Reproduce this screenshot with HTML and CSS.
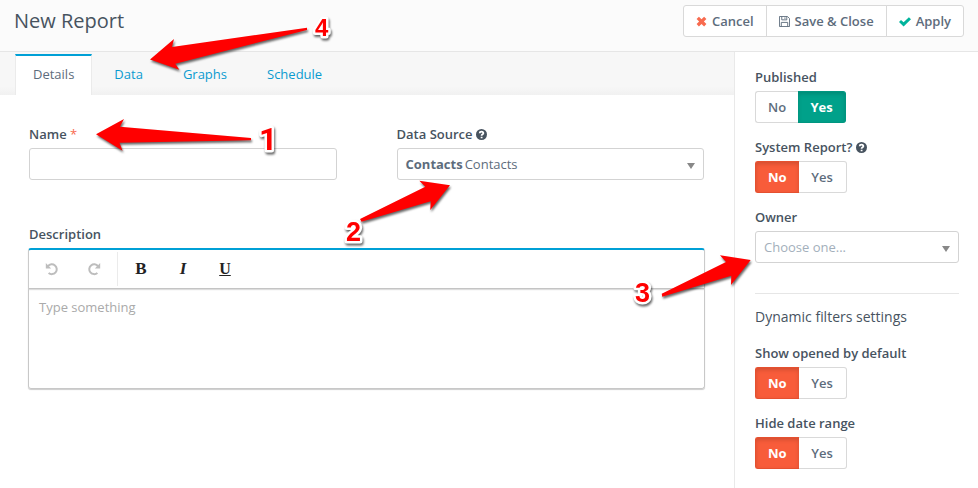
FILE: index.html
```html
<!DOCTYPE html>
<html lang="en">
<head>
    <meta charset="UTF-8">
    <meta name="viewport" content="width=device-width, initial-scale=1.0">
    <title>New Report</title>
    <link rel="stylesheet" href="styles.css">
</head>
<body>
<header class="page-header">
    <h1>New Report</h1>
    <div class="btn-group">
        <button type="button" class="btn">
            <svg class="icon icon-cancel" viewBox="0 0 11 11" width="11" height="11"><path d="M2.9 .8 5.5 3.3 8.1 .8 10.4 3.1 7.9 5.6 10.4 8.1 8.1 10.4 5.5 7.9 2.9 10.4 .6 8.1 3.1 5.6 .6 3.1z"/></svg>
            Cancel
        </button>
        <button type="button" class="btn">
            <svg class="icon icon-save" viewBox="0 0 12 12" width="11" height="11"><path d="M.5.5h8.7l2.3 2.3v8.7H.5zM3 .5v3.7h5.5V.5M2.5 11.5V7h7v4.5M6.5 1.5v1.7"/></svg>
            Save &amp; Close
        </button>
        <button type="button" class="btn">
            <svg class="icon icon-apply" viewBox="0 0 12 11" width="12" height="11"><path d="M2 3.9 4.6 6.3 9.9 1.2 12 3.3 4.6 10.4 0 6z"/></svg>
            Apply
        </button>
    </div>
</header>
<div class="page">
    <main class="content">
        <nav class="tabs">
            <a href="#details" class="tab active">Details</a>
            <a href="#data" class="tab">Data</a>
            <a href="#graphs" class="tab">Graphs</a>
            <a href="#schedule" class="tab">Schedule</a>
        </nav>
        <form class="report-form" id="details">
            <div class="form-row">
                <div class="form-group">
                    <label for="name">Name <span class="required">*</span></label>
                    <input type="text" id="name" class="form-control">
                </div>
                <div class="form-group">
                    <label for="source">Data Source
                        <svg class="help" viewBox="0 0 12 12" width="11" height="11"><circle cx="6" cy="6" r="6"/><path d="M4 4.6C4.1 2.3 8 2.4 8 4.6 8 6 6.1 5.7 6.1 7.4M6.1 8.4v1.6"/></svg>
                    </label>
                    <div class="form-control select-box">
                        <b>Contacts</b>
                        <select id="source">
                            <option>Contacts</option>
                        </select>
                    </div>
                </div>
            </div>
            <div class="form-group">
                <label for="description">Description</label>
                <div class="editor">
                    <div class="toolbar">
                        <div class="tool-group">
                            <button type="button" class="tool" aria-label="Undo" disabled>
                                <svg viewBox="0 0 14 14" width="14" height="14"><path class="arc" d="M3 4.2A4.9 4.9 0 1 1 3.6 10.9"/><path d="M.8 1v5.4h5.4z"/></svg>
                            </button>
                            <button type="button" class="tool" aria-label="Redo" disabled>
                                <svg viewBox="0 0 14 14" width="14" height="14"><path class="arc" d="M11 4.2A4.9 4.9 0 1 0 10.4 10.9"/><path d="M13.2 1v5.4H7.8z"/></svg>
                            </button>
                        </div>
                        <div class="tool-group">
                            <button type="button" class="tool">B</button>
                            <button type="button" class="tool tool-italic">I</button>
                            <button type="button" class="tool tool-underline">U</button>
                        </div>
                    </div>
                    <textarea id="description" placeholder="Type something"></textarea>
                </div>
            </div>
        </form>
    </main>
    <aside class="sidebar">
        <fieldset class="form-group">
            <legend>Published</legend>
            <div class="toggle">
                <input type="radio" name="published" id="published-no">
                <label for="published-no" class="no">No</label>
                <input type="radio" name="published" id="published-yes" checked>
                <label for="published-yes" class="yes">Yes</label>
            </div>
        </fieldset>
        <fieldset class="form-group">
            <legend>System Report?
                <svg class="help" viewBox="0 0 12 12" width="11" height="11"><circle cx="6" cy="6" r="6"/><path d="M4 4.6C4.1 2.3 8 2.4 8 4.6 8 6 6.1 5.7 6.1 7.4M6.1 8.4v1.6"/></svg>
            </legend>
            <div class="toggle">
                <input type="radio" name="system" id="system-no" checked>
                <label for="system-no" class="no">No</label>
                <input type="radio" name="system" id="system-yes">
                <label for="system-yes" class="yes">Yes</label>
            </div>
        </fieldset>
        <div class="form-group">
            <label for="owner">Owner</label>
            <div class="form-control select-box placeholder">
                <select id="owner">
                    <option>Choose one...</option>
                </select>
            </div>
        </div>
        <hr>
        <h2>Dynamic filters settings</h2>
        <fieldset class="form-group">
            <legend>Show opened by default</legend>
            <div class="toggle">
                <input type="radio" name="opened" id="opened-no" checked>
                <label for="opened-no" class="no">No</label>
                <input type="radio" name="opened" id="opened-yes">
                <label for="opened-yes" class="yes">Yes</label>
            </div>
        </fieldset>
        <fieldset class="form-group">
            <legend>Hide date range</legend>
            <div class="toggle">
                <input type="radio" name="daterange" id="daterange-no" checked>
                <label for="daterange-no" class="no">No</label>
                <input type="radio" name="daterange" id="daterange-yes">
                <label for="daterange-yes" class="yes">Yes</label>
            </div>
        </fieldset>
    </aside>
</div>
<!-- numbered arrows on top of the form -->
<svg class="annotations" viewBox="0 0 978 488" width="978" height="488">
    <path d="M96 134.3 124 119 120 126.7 251 138V140.3L119.5 142.8 122.5 150.7z"/>
    <path d="M450 185.3 419.3 180.7 425.3 186.7 360 219 361.5 221.7 430.7 201.3 430.3 210z"/>
    <path d="M750.7 260 720 255.3 726 262 661.7 293.7 662.3 296.7 731.3 275.7 731 285z"/>
    <path d="M150 59.5 174 39 172 47 307 27.7V30L175.3 63.7 179.3 69.7z"/>
    <text class="one" x="259" y="150" font-size="32">1</text>
    <text x="346" y="241" font-size="27">2</text>
    <text x="635" y="302" font-size="27">3</text>
    <text x="315" y="36" font-size="24">4</text>
</svg>
</body>
</html>
```
FILE: styles.css
```css
* {
    box-sizing: border-box;
}

body {
    margin: 0;
    min-height: 100vh;
    display: flex;
    flex-direction: column;
    background: #fff;
    color: #47535f;
    font-family: "Open Sans", sans-serif;
    font-size: 13px;
    line-height: 18px;
}

button, input, select, textarea {
    font: inherit;
    color: inherit;
}

/* header */
.page-header {
    display: flex;
    justify-content: space-between;
    align-items: center;
    padding: 5px 14px 14px;
    background: #fbfbfb;
    border-bottom: 1px solid #e6e6e6;
}

h1 {
    margin: 0;
    font-size: 20px;
    font-weight: 400;
    line-height: 32px;
}

.btn-group {
    display: flex;
}

.btn {
    display: flex;
    align-items: center;
    gap: 5px;
    height: 32px;
    margin-left: -1px;
    padding: 0 12px;
    background: #fff;
    border: 1px solid #d9d9d9;
    color: #5d6c7c;
    font-weight: 600;
}

.btn:first-child {
    border-radius: 3px 0 0 3px;
}

.btn:last-child {
    border-radius: 0 3px 3px 0;
}

.icon-cancel {
    fill: #f86b4f;
}

.icon-save {
    fill: none;
    stroke: #5d6c7c;
}

.icon-apply {
    fill: #00b49c;
}

/* layout */
.page {
    flex: 1;
    display: grid;
    grid-template-columns: 1fr 244px;
}

.content {
    min-width: 0;
}

.tabs {
    display: flex;
    gap: 4px;
    padding: 2px 15px 0;
    background: linear-gradient(#f7f7f7 80%, #f1f1f1);
}

.tab {
    height: 41px;
    padding: 0 17px;
    border: 1px solid transparent;
    border-top-width: 2px;
    border-bottom: 0;
    color: #0a9bd0;
    line-height: 37px;
    text-decoration: none;
}

.tab.active {
    background: #fff;
    border-color: #ebebeb;
    border-top-color: #00a0d6;
    color: #5d6c7c;
}

/* form */
.report-form {
    display: flex;
    flex-direction: column;
    gap: 45px;
    padding: 30px 30px 30px 29px;
}

.form-row {
    display: grid;
    grid-template-columns: 1fr 1fr;
    gap: 60px;
}

.form-group {
    display: flex;
    flex-direction: column;
    gap: 5px;
    min-width: 0;
    margin: 0;
    padding: 0;
    border: 0;
}

.form-group > label,
legend {
    padding: 0;
    font-weight: 600;
}

.required {
    color: #f86b4f;
    font-weight: 400;
}

.help {
    vertical-align: -1px;
    fill: #47535f;
}

.help path {
    fill: none;
    stroke: #fff;
    stroke-width: 2;
}

.form-control {
    width: 100%;
    height: 32px;
    padding: 0 8px;
    background: #fff;
    border: 1px solid #d3d3d3;
    border-radius: 3px;
    color: #5d6c7c;
}

.select-box {
    display: flex;
    align-items: center;
    gap: 2px;
}

.select-box::after {
    content: "";
    margin-top: 3px;
    border: 4px solid transparent;
    border-top: 6px solid #888;
    border-bottom: 0;
}

.select-box select {
    flex: 1;
    min-width: 0;
    padding: 0;
    border: 0;
    background: none;
    appearance: none;
}

.placeholder {
    color: #a3afbb;
}

/* editor */
.editor {
    margin: 0 -1px;
    border: 1px solid #c8c8c8;
    border-top: 2px solid #00a0d6;
    border-radius: 3px;
    box-shadow: 0 1px 1px #ccc;
}

.toolbar {
    display: flex;
    height: 39px;
    border-bottom: 1px solid #c4c4c4;
    box-shadow: 0 1px 1px #ddd;
}

.tool-group {
    display: flex;
    margin: 2px 0;
    padding: 0 2px;
}

.tool-group + .tool-group {
    border-left: 1px solid #ebebeb;
}

.tool {
    width: 42px;
    padding: 0;
    border: 0;
    background: none;
    color: #222;
    font-family: "Liberation Serif", serif;
    font-size: 17px;
    font-weight: 700;
}

.tool svg {
    display: block;
    margin: 0 auto;
    fill: #bdbdbd;
}

.tool .arc {
    fill: none;
    stroke: #bdbdbd;
    stroke-width: 2;
}

.tool-italic {
    font-style: italic;
}

.tool-underline {
    font-size: 16px;
    text-decoration: underline;
}

.editor textarea {
    display: block;
    width: 100%;
    height: 99px;
    padding: 9px 10px;
    border: 0;
    background: none;
    resize: none;
}

.editor textarea::placeholder {
    color: #aaa;
}

/* sidebar */
.sidebar {
    display: flex;
    flex-direction: column;
    gap: 15px;
    padding: 16px 19px 16px 20px;
    border-left: 1px solid #e9e9e9;
}

legend {
    margin-bottom: 5px;
}

.sidebar hr {
    width: 100%;
    margin: 15px 0 0;
    border: 0;
    border-top: 1px solid #e6e6e6;
}

h2 {
    margin: 0 0 4px;
    font-size: 14px;
    font-weight: 400;
    line-height: 16px;
}

.toggle {
    display: flex;
}

.toggle input {
    position: absolute;
    opacity: 0;
}

.toggle label {
    min-width: 43px;
    height: 32px;
    padding: 0 12px;
    border: 1px solid #d9d9d9;
    color: #5d6c7c;
    font-weight: 600;
    line-height: 30px;
    text-align: center;
}

.toggle .no {
    border-right: 0;
    border-radius: 3px 0 0 3px;
}

.toggle .yes {
    min-width: 48px;
    border-left: 0;
    border-radius: 0 3px 3px 0;
}

.toggle input:checked + label {
    color: #fff;
    font-weight: 700;
    box-shadow: inset 0 2px 4px rgba(0, 0, 0, 0.15);
}

.toggle input:checked + .no {
    background: #f85c3a;
    border-color: #e5502f;
}

.toggle input:checked + .yes {
    background: #00a18a;
    border-color: #009680;
}

/* annotations */
.annotations {
    position: absolute;
    top: 0;
    left: 0;
    pointer-events: none;
    fill: #f00;
    filter: drop-shadow(1px 2px 1px rgba(0, 0, 0, 0.6));
}

.annotations text {
    font-family: "Liberation Sans", sans-serif;
    font-weight: 700;
    stroke: #fff;
    stroke-width: 5px;
    stroke-linejoin: round;
    paint-order: stroke;
}

.annotations .one {
    font-family: Roboto, sans-serif;
}
```
